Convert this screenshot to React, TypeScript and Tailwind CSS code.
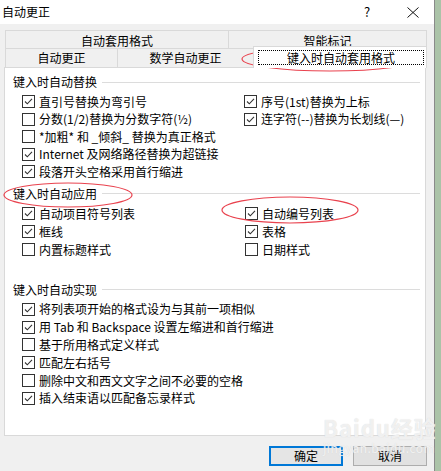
const Check = ({ checked }: { checked: boolean }) => (
  <span className="flex h-[13px] w-[13px] shrink-0 items-center justify-center border border-[#333] bg-white">
    {checked && (
      <svg width="11" height="11" viewBox="0 0 11 11">
        <path d="M2 5.5 L4.3 7.8 L9 2.8" fill="none" stroke="#333" strokeWidth="1.1" />
      </svg>
    )}
  </span>
);

const Item = ({ label, checked, row }: { label: string; checked: boolean; row: string }) => (
  <div className={`flex items-center gap-[4px] ${row}`}>
    <Check checked={checked} />
    <span className="whitespace-nowrap text-[12px] leading-4">{label}</span>
  </div>
);

const Header = ({ title, className }: { title: string; className: string }) => (
  <div className={`flex h-4 items-center pl-2 pr-[5px] ${className}`}>
    <span className="text-[12px] leading-4">{title}</span>
    <span className="ml-[5px] h-px flex-1 bg-[#dcdcdc]" />
  </div>
);

const replaceLeft = [
  { label: "直引号替换为弯引号", checked: true },
  { label: "分数(1/2)替换为分数字符(½)", checked: false },
  { label: "*加粗* 和 _倾斜_ 替换为真正格式", checked: false },
  { label: "Internet 及网络路径替换为超链接", checked: true },
  { label: "段落开头空格采用首行缩进", checked: true },
];

const replaceRight = [
  { label: "序号(1st)替换为上标", checked: true },
  { label: "连字符(--)替换为长划线(—)", checked: true },
];

const applyItems = [
  { label: "自动项目符号列表", checked: true },
  { label: "自动编号列表", checked: true },
  { label: "框线", checked: true },
  { label: "表格", checked: true },
  { label: "内置标题样式", checked: false },
  { label: "日期样式", checked: false },
];

const doItems = [
  { label: "将列表项开始的格式设为与其前一项相似", checked: true },
  { label: "用 Tab 和 Backspace 设置左缩进和首行缩进", checked: true },
  { label: "基于所用格式定义样式", checked: false },
  { label: "匹配左右括号", checked: true },
  { label: "删除中文和西文文字之间不必要的空格", checked: false },
  { label: "插入结束语以匹配备忘录样式", checked: true },
];

export default function App() {
  return (
    <div className="relative flex h-[471px] w-[441px] overflow-hidden bg-[#f0f0f0] font-['Noto_Sans_CJK_SC','Liberation_Sans',sans-serif] text-black">
      {/* dialog */}
      <div className="flex w-[435px] flex-col border-r border-[#8a8a8a]">
        {/* title bar */}
        <div className="flex h-[24px] items-center bg-white">
          <span className="pl-[2px] text-[12px] leading-4">自动更正</span>
          <span className="ml-[314px] text-[13px] leading-4">?</span>
          <svg className="ml-[37px]" width="12" height="11" viewBox="0 0 12 11">
            <path d="M0.5 0.5 L11.5 10.5 M11.5 0.5 L0.5 10.5" stroke="#111" strokeWidth="1" />
          </svg>
        </div>

        {/* body */}
        <div className="flex flex-1 flex-col pt-[6px]">
          {/* back tab row */}
          <div className="flex h-[18px] pl-[5px] text-[12px]">
            <div className="flex w-[223px] items-center justify-center border-l border-t border-[#d9d9d9] pt-[2px] leading-[15px]">
              自动套用格式
            </div>
            <div className="flex w-[199px] items-center justify-center border-l border-r border-t border-[#d9d9d9] pt-[2px] leading-[15px]">
              智能标记
            </div>
          </div>
          {/* front tab row */}
          <div className="relative z-10 -mt-[2px] flex h-[21px] items-end pl-[5px] text-[12px]">
            <div className="flex h-[19px] w-[112px] items-center justify-center border-l border-t border-[#d9d9d9] leading-4">
              自动更正
            </div>
            <div className="flex h-[19px] w-[136px] items-center justify-center border-l border-t border-[#d9d9d9] leading-4">
              数学自动更正
            </div>
            <div className="-mb-px h-[22px] w-[174px] border-l border-r border-t border-[#d9d9d9] bg-white pl-[4px] pr-[2px] pt-[3px]">
              <div className="flex h-[15px] items-center justify-center border border-dotted border-black leading-4">
                键入时自动套用格式
              </div>
            </div>
          </div>

          {/* panel */}
          <div className="ml-[4px] h-[369px] w-[422px] border border-[#d9d9d9] bg-white pt-[6px]">
            <Header title="键入时自动替换" className="" />
            <div className="mt-[3px] grid grid-cols-[222px_1fr] pl-[17px]">
              <div className="flex flex-col">
                {replaceLeft.map((it) => (
                  <Item key={it.label} label={it.label} checked={it.checked} row="h-[17.5px]" />
                ))}
              </div>
              <div className="flex flex-col">
                {replaceRight.map((it) => (
                  <Item key={it.label} label={it.label} checked={it.checked} row="h-[17.5px]" />
                ))}
              </div>
            </div>

            <Header title="键入时自动应用" className="mt-[5px]" />
            <div className="mt-[3px] grid grid-cols-[223px_1fr] pl-[17px]">
              {applyItems.map((it) => (
                <Item key={it.label} label={it.label} checked={it.checked} row="h-[18px]" />
              ))}
            </div>

            <Header title="键入时自动实现" className="mt-[23px]" />
            <div className="mt-[3px] flex flex-col pl-[17px]">
              {doItems.map((it) => (
                <Item key={it.label} label={it.label} checked={it.checked} row="h-[17.8px]" />
              ))}
            </div>
          </div>

          {/* buttons */}
          <div className="mt-[10px] flex justify-end gap-[10px] pr-[7px] text-[12px]">
            <button className="flex h-[20px] w-[74px] items-center justify-center border-2 border-[#0078d7] bg-[#e5e5e5] leading-4">
              确定
            </button>
            <button className="flex h-[20px] w-[74px] items-center justify-center border border-[#adadad] bg-[#e1e1e1] leading-4">
              取消
            </button>
          </div>
        </div>
      </div>
      {/* desktop strip at right */}
      <div className="w-[6px] bg-[#abc3a8]" />

      {/* faint watermark */}
      <div className="pointer-events-none absolute left-[323px] top-[414px] flex flex-col items-start text-white/70 [text-shadow:0_0_1px_#cfcfcf]">
        <span className="text-[22px] font-bold leading-[26px] tracking-[1px]">Baidu经验</span>
        <span className="text-[12px] leading-4 tracking-[0.5px]">jingyan.baidu.com</span>
      </div>

      {/* red annotation ellipses */}
      <svg className="pointer-events-none absolute left-0 top-0" width="441" height="471">
        <ellipse cx="330" cy="59" rx="88" ry="12" fill="none" stroke="#e9424e" strokeWidth="1.2" />
        <ellipse cx="68" cy="195" rx="64" ry="12" fill="none" stroke="#e9424e" strokeWidth="1.2" />
        <ellipse cx="290" cy="210" rx="68" ry="13" fill="none" stroke="#e9424e" strokeWidth="1.2" />
      </svg>
    </div>
  );
}
